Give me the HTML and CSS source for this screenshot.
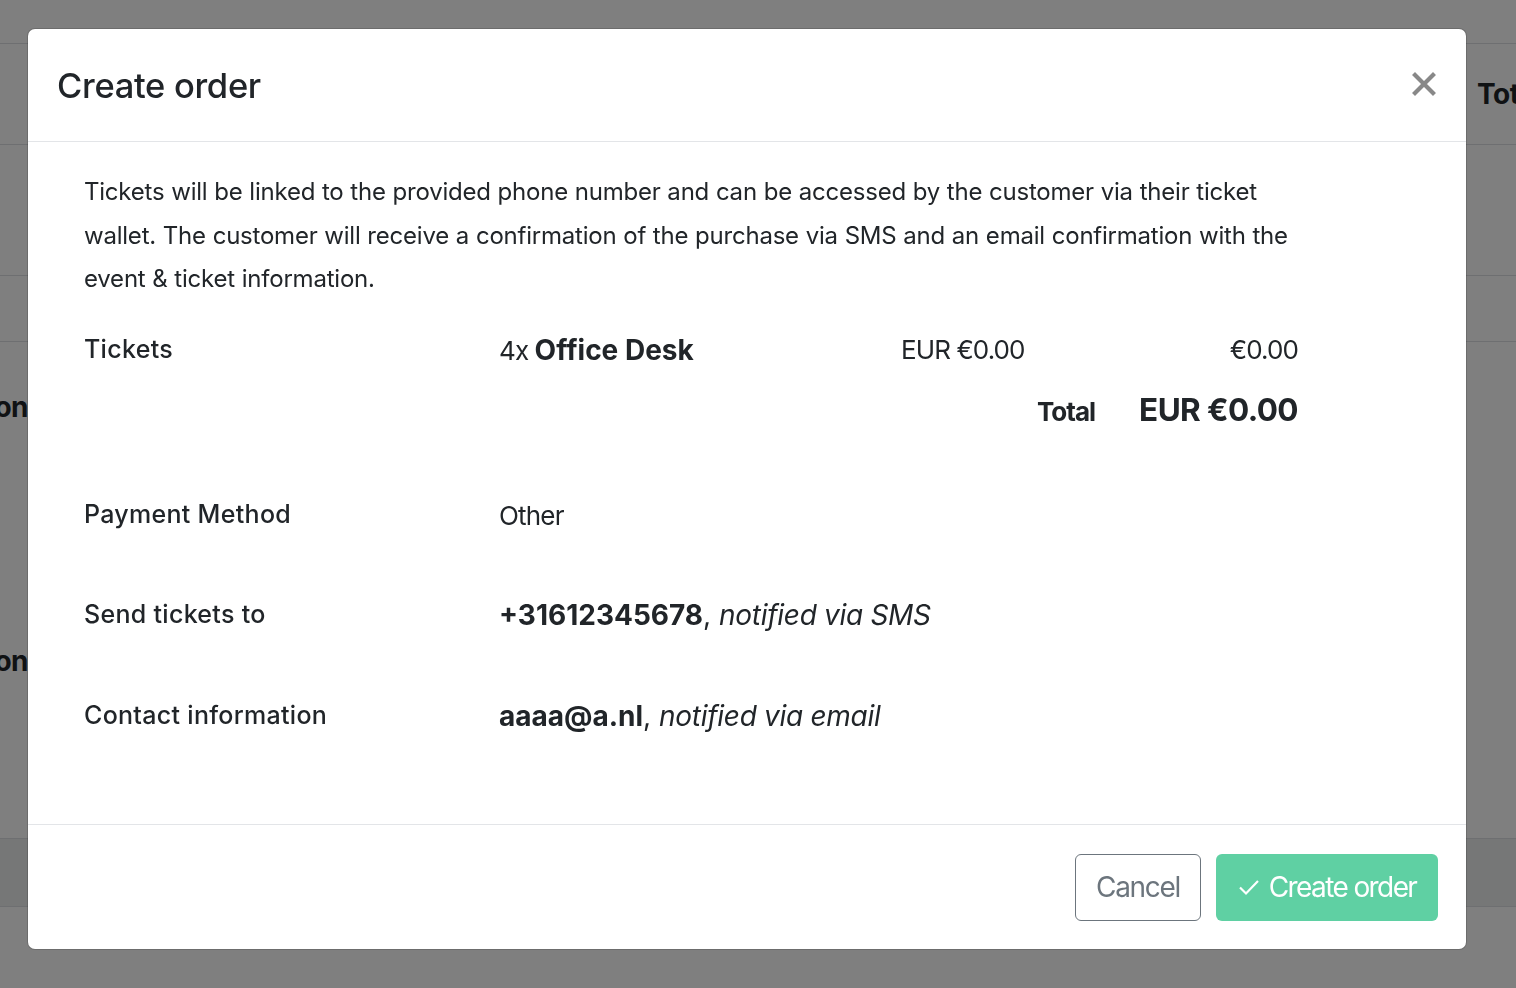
FILE: index.html
```html
<!DOCTYPE html>
<html lang="en">
<head>
    <meta charset="UTF-8">
    <meta name="viewport" content="width=device-width, initial-scale=1.0">
    <title>Create order</title>
    <link rel="stylesheet" href="styles.css">
</head>
<body>
    <!-- Page behind the modal -->
    <div class="page">
        <div class="page-row page-top"></div>
        <div class="page-row page-head">
            <span class="page-cell-right">Total</span>
        </div>
        <div class="page-row page-r1"></div>
        <div class="page-row page-r2"></div>
        <div class="page-row page-r3">
            <span class="page-cell-left on-1">Location</span>
            <span class="page-cell-left on-2">Description</span>
        </div>
        <div class="page-row page-band"></div>
    </div>

    <div class="backdrop"></div>

    <div class="overlay">
        <div class="modal">
            <div class="modal-header">
                <h4 class="modal-title">Create order</h4>
                <button class="close-btn" aria-label="Close">
                    <svg width="24" height="24" viewBox="0 0 24 24">
                        <path d="M3 3 L21 21 M21 3 L3 21" stroke="#888" stroke-width="4.2" stroke-linecap="square"/>
                    </svg>
                </button>
            </div>

            <div class="modal-body">
                <div class="content">
                    <p class="intro">Tickets will be linked to the provided phone number and can be accessed by the customer via their ticket wallet. The customer will receive a confirmation of the purchase via SMS and an email confirmation with the event &amp; ticket information.</p>

                    <div class="row row-tickets">
                        <div class="label">Tickets</div>
                        <div class="value">
                            <div class="line-item">
                                <span class="item-name">4x <b>Office Desk</b></span>
                                <span class="item-price">EUR €0.00</span>
                                <span class="item-sub">€0.00</span>
                            </div>
                            <div class="total-line">
                                <span class="total-label">Total</span>
                                <span class="total-amount">EUR €0.00</span>
                            </div>
                        </div>
                    </div>

                    <div class="row row-payment">
                        <div class="label">Payment Method</div>
                        <div class="value plain">Other</div>
                    </div>

                    <div class="row row-send">
                        <div class="label">Send tickets to</div>
                        <div class="value contact"><b>+31612345678</b>, <i>notified via SMS</i></div>
                    </div>

                    <div class="row row-contact">
                        <div class="label">Contact information</div>
                        <div class="value contact"><b>aaaa@a.nl</b>, <i>notified via email</i></div>
                    </div>
                </div>
            </div>

            <div class="modal-footer">
                <button class="btn btn-cancel">Cancel</button>
                <button class="btn btn-create">
                    <svg width="22" height="18" viewBox="0 0 22 18">
                        <path d="M2 9.5 L8 15.5 L20 3" fill="none" stroke="#fff" stroke-width="2.2"/>
                    </svg>
                    Create order
                </button>
            </div>
        </div>
    </div>
</body>
</html>
```

FILE: styles.css
```css
* {
    margin: 0;
    padding: 0;
    box-sizing: border-box;
}

body {
    font-family: 'Inter', 'Noto Sans', sans-serif;
    color: #212529;
    background: #fff;
    width: 1516px;
    height: 988px;
    overflow: hidden;
}

/* background page */
.page {
    width: 100%;
}

.page-row {
    border-bottom: 1px solid #dcdee2;
    position: relative;
}

.page-top { height: 44px; }
.page-head { height: 101px; display: flex; align-items: center; }
.page-r1 { height: 131px; }
.page-r2 { height: 66px; }
.page-r3 { height: 497px; }
.page-band { height: 68px; background: #eceeef; }

.page-cell-right {
    margin-left: 1477px;
    font-size: 28px;
    font-weight: 700;
    letter-spacing: -0.5px;
    color: #212529;
}

.page-cell-left {
    position: absolute;
    right: calc(100% - 28px);
    font-size: 28px;
    font-weight: 700;
    color: #212529;
    white-space: nowrap;
    letter-spacing: -0.5px;
}

.on-1 { top: 48px; }
.on-2 { top: 302px; }

.backdrop {
    position: fixed;
    inset: 0;
    background: rgba(0, 0, 0, 0.5);
}

.overlay {
    position: fixed;
    inset: 0;
    padding: 29px 0 0 28px;
}

/* modal */
.modal {
    width: 1438px;
    height: 920px;
    background: #fff;
    border-radius: 7px;
    display: flex;
    flex-direction: column;
    box-shadow: 0 0 0 1px rgba(0, 0, 0, 0.15);
}

.modal-header {
    height: 113px;
    flex-shrink: 0;
    display: flex;
    align-items: center;
    justify-content: space-between;
    padding: 0 30px 0 29px;
    border-bottom: 1px solid #e3e5e8;
}

.modal-title {
    font-size: 34.5px;
    font-weight: 500;
    letter-spacing: -0.3px;
    color: #212529;
}

.close-btn {
    background: none;
    border: none;
    width: 24px;
    height: 24px;
    display: flex;
    margin-top: -2px;
}

.modal-body {
    flex: 1;
    padding: 28px 56px 0 56px;
}

.content {
    width: 1214px;
}

.intro {
    font-size: 24px;
    line-height: 43.5px;
    letter-spacing: -0.22px;
    word-spacing: 0.3px;
}

.row {
    display: grid;
    grid-template-columns: 415px 1fr;
    line-height: 40px;
}

.label {
    font-size: 25px;
    font-weight: 500;
    letter-spacing: 0.3px;
}

.row-tickets { margin-top: 28px; }
.row-payment { margin-top: 62px; }
.row-send { margin-top: 58px; }
.row-contact { margin-top: 60px; }

.line-item {
    display: grid;
    grid-template-columns: 402px 1fr auto;
    font-size: 26px;
    letter-spacing: -0.9px;
    margin-top: 1px;
}

.item-name b {
    font-size: 28px;
    font-weight: 700;
    letter-spacing: 0;
}

.item-sub {
    text-align: right;
}

.total-line {
    display: flex;
    justify-content: flex-end;
    align-items: baseline;
    gap: 44px;
    margin-top: 19px;
}

.total-label {
    font-size: 26px;
    font-weight: 700;
    letter-spacing: -1px;
}

.total-amount {
    font-size: 31.5px;
    font-weight: 700;
    letter-spacing: -0.6px;
}

.plain {
    font-size: 26px;
    letter-spacing: -0.8px;
    margin-top: 2px;
}

.contact {
    font-size: 28px;
    margin-top: 1px;
}

.contact b {
    font-weight: 700;
}

.contact i {
    font-style: italic;
    letter-spacing: -0.3px;
}

.modal-footer {
    height: 125px;
    flex-shrink: 0;
    border-top: 1px solid #e3e5e8;
    display: flex;
    justify-content: flex-end;
    align-items: center;
    gap: 15px;
    padding: 0 28px 0 0;
}

.btn {
    height: 67px;
    border-radius: 6px;
    font-family: 'Inter', sans-serif;
    font-size: 28px;
    letter-spacing: -1.3px;
    display: flex;
    align-items: center;
    justify-content: center;
    cursor: pointer;
}

.btn-cancel {
    width: 126px;
    background: #fff;
    border: 1px solid #6c757d;
    color: #6c757d;
}

.btn-create {
    width: 222px;
    background: #5fd0a3;
    border: none;
    color: #fff;
    gap: 9px;
    letter-spacing: -1.6px;
}
```
